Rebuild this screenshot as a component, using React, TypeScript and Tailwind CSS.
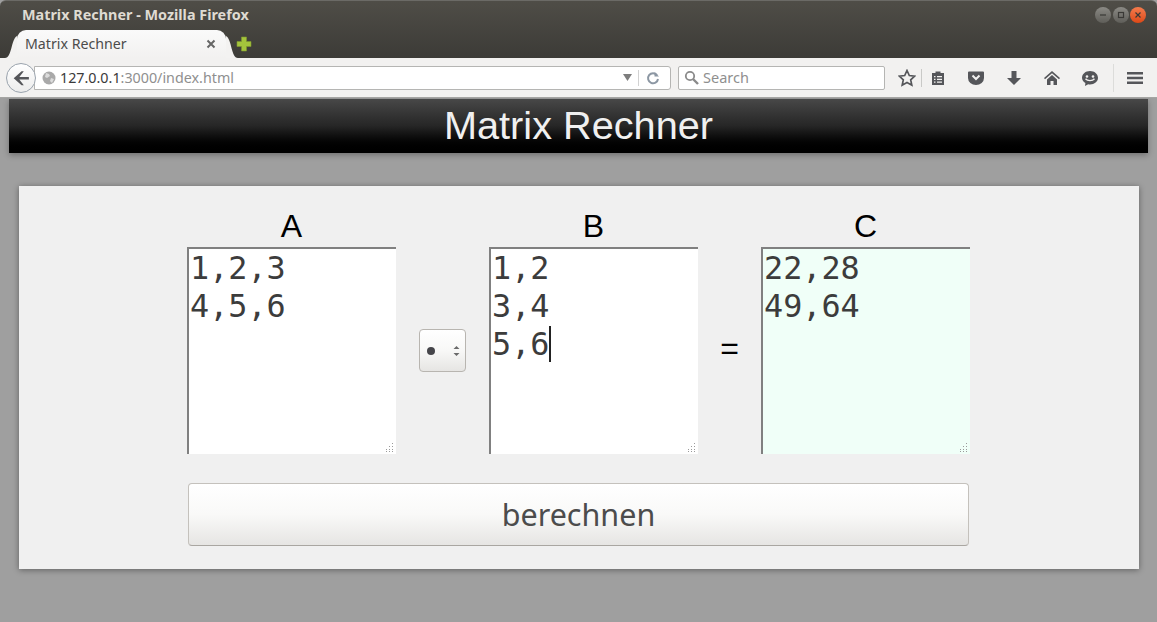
import React from "react";

const mono = "font-['DejaVu_Sans_Mono',monospace]";
const ui = "font-['Noto_Sans','Open_Sans',sans-serif]";
const arial = "font-['Liberation_Sans',Arial,sans-serif]";

const Grip = () => (
  <svg className="absolute bottom-[1px] right-[1px]" width="11" height="11" viewBox="0 0 11 11" fill="#9a9a9a">
    <rect x="8" y="1" width="1" height="1" />
    <rect x="8" y="4" width="1" height="1" />
    <rect x="5" y="4" width="1" height="1" />
    <rect x="8" y="7" width="1" height="1" />
    <rect x="5" y="7" width="1" height="1" />
    <rect x="2" y="7" width="1" height="1" />
    <rect x="8" y="9" width="1" height="1" />
    <rect x="5" y="9" width="1" height="1" />
    <rect x="2" y="9" width="1" height="1" />
  </svg>
);

const MatrixField = ({ label, lines, bg = "bg-white", caret = false }: { label: string; lines: string[]; bg?: string; caret?: boolean }) => (
  <div className="flex w-[209px] shrink-0 flex-col items-center">
    <div className={`${arial} h-[37px] text-[32px] leading-[33px] text-black`}>{label}</div>
    <div className={`relative h-[207px] w-full border-t-2 border-l-2 border-t-[#808080] border-l-[#808080] ${bg} ${mono} pl-[1px] text-[31.8px] leading-[38px] text-[#3c3c3c]`}>
      {lines.map((line, i) => (
        <div key={line} className="flex h-[38px] items-center">
          {line}
          {caret && i === lines.length - 1 && <span className="h-[36px] w-[2px] bg-[#222]" />}
        </div>
      ))}
      <Grip />
    </div>
  </div>
);

const WindowButton = ({ color, children }: { color: string; children: React.ReactNode }) => (
  <div className={`flex h-[16px] w-[16px] items-center justify-center rounded-full ${color}`}>
    <svg width="10" height="10" viewBox="0 0 10 10" fill="none" stroke="#3a3936" strokeWidth="1.2">{children}</svg>
  </div>
);

const ToolIcon = ({ children, className = "" }: { children: React.ReactNode; className?: string }) => (
  <svg width="18" height="18" viewBox="0 0 18 18" className={`shrink-0 ${className}`} fill="#55565a">{children}</svg>
);

export default function App() {
  return (
    <div className="flex h-[622px] w-[1157px] flex-col overflow-hidden bg-[#9f9f9f]">
      {/* Window title + tabs */}
      <div className="h-[58px] shrink-0 rounded-t-[6px] border-t border-[#6b6a66] bg-gradient-to-b from-[#4f4d47] to-[#3c3b37]">
        <div className="flex h-[28px] items-center justify-between pl-[22px] pr-[11px]">
          <span className={`${ui} text-[14.4px] font-bold text-[#dfdbd2]`}>Matrix Rechner - Mozilla Firefox</span>
          <div className="flex gap-[1.5px]">
            <WindowButton color="bg-gradient-to-b from-[#8b8a85] to-[#5f5e59]"><path d="M2 5h6" /></WindowButton>
            <WindowButton color="bg-gradient-to-b from-[#8b8a85] to-[#5f5e59]"><rect x="2.5" y="2.5" width="5" height="5" /></WindowButton>
            <WindowButton color="bg-gradient-to-b from-[#f47b4c] to-[#dd4814]"><path d="M2.5 2.5l5 5M7.5 2.5l-5 5" /></WindowButton>
          </div>
        </div>
        <div className="flex h-[29px] items-end pl-[17px]">
          <div className={`${ui} relative flex h-[28px] w-[209px] items-center justify-between rounded-t-[9px] bg-gradient-to-b from-[#fafafa] to-[#f2f1f0] pl-[8px] pr-[10px] text-[14.2px] text-[#4c4c4c]`}>
            <svg className="absolute bottom-0 -left-[12px]" width="12" height="22" viewBox="0 0 12 22" fill="#f3f2f1"><path d="M12 0C6 3 7 22 0 22h12z" /></svg>
            <svg className="absolute bottom-0 -right-[12px]" width="12" height="22" viewBox="0 0 12 22" fill="#f3f2f1"><path d="M0 0c6 3 5 22 12 22H0z" /></svg>
            <span>Matrix Rechner</span>
            <svg width="10" height="10" viewBox="0 0 10 10" stroke="#666" strokeWidth="2"><path d="M1.500 1.500l7 7M8.500 1.500l-7 7" /></svg>
          </div>
          <svg width="16" height="16" viewBox="0 0 16 16" className="mb-[6px] ml-[10px]" fill="#a4c43c" stroke="#7f9a2c" strokeWidth="0.6">
            <path d="M5.500 1h5v4.500H15v5h-4.500V15h-5v-4.500H1v-5h4.500z" />
          </svg>
        </div>
      </div>

      {/* Nav toolbar */}
      <div className={`${ui} relative flex h-[40px] shrink-0 items-center border-b border-[#a5a5a3] bg-[#f2f1f0] pl-[6px]`}>
        <div className="z-10 flex h-[30px] w-[30px] shrink-0 items-center justify-center rounded-full border border-[#9aa3ad] bg-gradient-to-b from-white to-[#ececec]">
          <svg width="18" height="18" viewBox="0 0 16 16" fill="#55565a"><path d="M8.500 2l2 0-4 5H15v2.400H6.500l4 5h-2L1.500 8.200z" /></svg>
        </div>
        <div className="-ml-[2px] flex h-[24px] w-[637px] shrink-0 items-center rounded-r-[3px] border border-[#b5b5b3] bg-white pl-[7px] text-[14.3px]">
          <svg width="14" height="14" viewBox="0 0 14 14" className="shrink-0"><circle cx="7" cy="7" r="6.500" fill="#a9a9a9" /><path d="M4 2l3 1 1 2-3 2-2-1zM9 7l3 1-2 4-2-2z" fill="#dcdcdc" /></svg>
          <span className="ml-[4px] text-[#3a3a3a]">127.0.0.1<span className="text-[#8f8f8f]">:3000/index.html</span></span>
          <div className="ml-auto flex items-center">
            <svg width="9" height="7" viewBox="0 0 9 7" fill="#7d7d7d"><path d="M0 0h9L4.500 7z" /></svg>
            <div className="ml-[6px] h-[16px] w-px bg-[#d2d2d2]" />
            <svg width="14" height="14" viewBox="0 0 14 14" fill="none" stroke="#8c97a3" strokeWidth="2" className="ml-[7px] mr-[10px]">
              <path d="M11 4.200A5 5 0 1 0 12 8" />
              <path d="M8.500 1v4.500H13z" fill="#8c97a3" stroke="none" />
            </svg>
          </div>
        </div>
        <div className="ml-[7px] flex h-[24px] w-[207px] shrink-0 items-center rounded-[2px] border border-[#b5b5b3] bg-white pl-[5px] text-[14.5px] text-[#8f8f8f]">
          <svg width="15" height="15" viewBox="0 0 15 15" fill="none" stroke="#8a8a8a" strokeWidth="1.800"><circle cx="6" cy="6" r="4.200" /><path d="M9 9l5 5" strokeWidth="2.400" /></svg>
          <span className="ml-[4px]">Search</span>
        </div>
        <ToolIcon className="ml-[13px]"><path d="M9 1.500l2.300 5 5.400.6-4 3.700 1.100 5.400L9 13.500 4.200 16.200l1.100-5.400-4-3.700 5.400-.6z" fill="none" stroke="#55565a" strokeWidth="1.700" /></ToolIcon>
        <div className="ml-[5px] h-[18px] w-px bg-[#c9c9c7]" />
        <ToolIcon className="ml-[7px]"><path d="M3 4h3.500V2.500h5V4H15v12H3z" /><path d="M5 7h1.500v1.300H5zM8 7h5v1.300H8zM5 9.700h1.500V11H5zM8 9.700h5V11H8zM5 12.400h1.500v1.300H5zM8 12.400h5v1.300H8z" fill="#f2f1f0" /></ToolIcon>
        <ToolIcon className="ml-[20px]"><path d="M2 2.500h14a1 1 0 0 1 1 1V9a8 7 0 0 1-16 0V3.500a1 1 0 0 1 1-1z" /><path d="M5.500 6.500L9 10l3.500-3.500" fill="none" stroke="#f2f1f0" strokeWidth="2" /></ToolIcon>
        <ToolIcon className="ml-[20px]"><path d="M6.500 2h5v7H16l-7 7-7-7h4.500z" /></ToolIcon>
        <ToolIcon className="ml-[20px]"><path d="M9 2l8 7-1 1.200L9 4.300 2 10.200 1 9zM4 10.500L9 6l5 4.500V16h-3.500v-4h-3v4H4z" /></ToolIcon>
        <ToolIcon className="ml-[20px]"><path d="M9 2c4.400 0 8 2.900 8 6.800s-3.600 6.700-8 6.700c-.6 0-1.200 0-1.800-.2L4 17l.4-3C2.300 12.800 1 11 1 8.800 1 4.900 4.600 2 9 2z" /><circle cx="6" cy="7.500" r="1.300" fill="#f2f1f0" /><circle cx="12" cy="7.500" r="1.300" fill="#f2f1f0" /><path d="M4.500 9.800c2 2.400 7 2.400 9 0" fill="none" stroke="#f2f1f0" strokeWidth="1.400" /></ToolIcon>
        <div className="ml-[14px] h-[28px] w-px bg-[#dcdcda]" />
        <ToolIcon className="ml-[12px]"><path d="M1 3h16v2.400H1zM1 7.800h16v2.400H1zM1 12.600h16V15H1z" /></ToolIcon>
      </div>

      {/* Page */}
      <div className="flex flex-1 flex-col items-start px-[9px] pt-[1px]">
        <div className={`${arial} flex h-[54px] w-full shrink-0 items-center justify-center bg-gradient-to-b from-[#484848] via-[#262626] to-black text-[39.7px] text-[#f0f0f0] shadow-[0_2px_6px_rgba(0,0,0,0.3)]`}>
          Matrix Rechner
        </div>
        <div className="ml-[10px] mt-[33px] flex h-[383px] w-[1120px] flex-col items-start bg-[#f0f0f0] pl-[168px] pt-[24px] shadow-[0_1px_6px_rgba(0,0,0,0.4)]">
          <div className="flex items-end">
            <MatrixField label="A" lines={["1,2,3", "4,5,6"]} />
            <div className="ml-[23px] flex h-[207px] items-center">
              <div className="flex h-[43px] w-[47px] items-center justify-between rounded-[4px] border border-[#b8b5b0] bg-gradient-to-b from-white via-[#f8f8f7] to-[#e6e5e3] pl-[7px] pr-[5px]">
                <span className="h-[8px] w-[8px] rounded-full bg-[#45454a]" />
                <svg width="7" height="12" viewBox="0 0 7 12" fill="#6a6a6a"><path d="M3.500 1L6.500 4h-6zM3.500 11L.5 8h6z" /></svg>
              </div>
            </div>
            <div className="ml-[23px]">
              <MatrixField label="B" lines={["1,2", "3,4", "5,6"]} caret />
            </div>
            <div className={`${arial} flex h-[207px] w-[63px] shrink-0 items-center justify-center pb-[6px] text-[32px] text-black`}>=</div>
            <MatrixField label="C" lines={["22,28", "49,64"]} bg="bg-[#f0fff8]" />
          </div>
          <div className="ml-[1px] mt-[29px] flex h-[63px] w-[781px] items-center justify-center rounded-[4px] border border-[#c4c1bc] border-b-[#a9a6a1] bg-gradient-to-b from-white via-[#f9f9f8] to-[#e6e5e3] font-['Noto_Sans',sans-serif] text-[30.5px] text-[#4c4c4c]">
            berechnen
          </div>
        </div>
      </div>
    </div>
  );
}
